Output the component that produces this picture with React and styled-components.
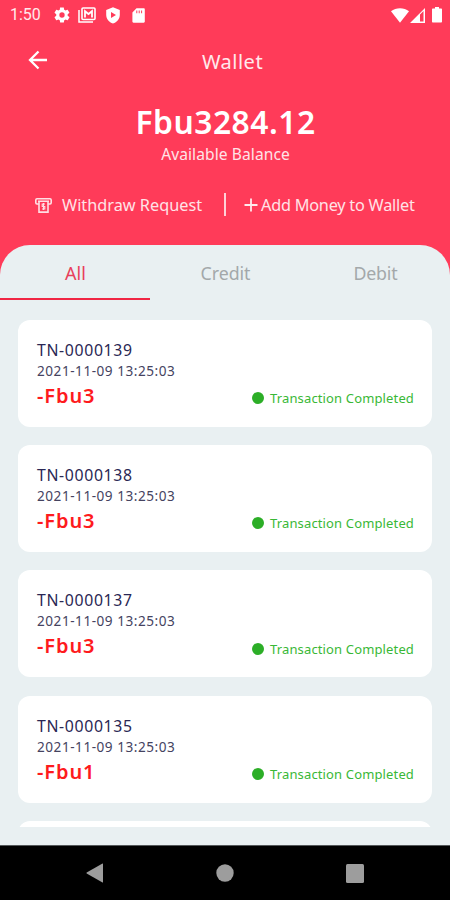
import React from "react";
import styled, { createGlobalStyle } from "styled-components";

const Global = createGlobalStyle`
  * { box-sizing: border-box; }
  html, body { margin: 0; padding: 0; overflow: hidden; }
  body { font-family: "Noto Sans", "Open Sans", sans-serif; }
`;

const Screen = styled.div`
  width: 450px;
  height: 900px;
  display: flex;
  flex-direction: column;
  overflow: hidden;
  background: #ff3b59;
`;

const StatusBar = styled.div`
  height: 30px;
  flex: none;
  display: flex;
  align-items: center;
  justify-content: space-between;
  padding: 0 8px 0 10px;
  color: #fff;
`;

const StatusGroup = styled.div`
  display: flex;
  align-items: center;
`;

const Clock = styled.span`
  width: 44px;
  font: 400 16px/30px Roboto, sans-serif;
  color: #ffe9ec;
`;

const TitleBar = styled.div`
  height: 62px;
  flex: none;
  display: grid;
  grid-template-columns: 75px 1fr 60px;
  align-items: center;
`;

const BackButton = styled.button`
  border: 0;
  padding: 0 0 2px 26px;
  background: none;
  display: flex;
`;

const Label = styled.span`
  display: block;
  white-space: nowrap;
  font-size: ${(p) => p.$size}px;
  line-height: ${(p) => p.$line}px;
  font-weight: ${(p) => p.$weight || 400};
  letter-spacing: ${(p) => p.$track || 0}px;
  color: ${(p) => p.$color || "#fff"};
`;

const Title = styled(Label)`
  text-align: center;
  padding-top: 2px;
`;

const Balance = styled.div`
  height: 96px;
  flex: none;
  padding: 10px 0 0 1px;
  display: flex;
  flex-direction: column;
  align-items: center;
`;

const Actions = styled.div`
  height: 57px;
  flex: none;
  display: flex;
  align-items: flex-start;
  padding: 5px 0 0 35px;
`;

const Action = styled.div`
  height: 24px;
  display: flex;
  align-items: center;
  gap: ${(p) => p.$gap}px;
  width: ${(p) => p.$width}px;
`;

const Divider = styled.div`
  width: 2px;
  height: 23px;
  margin-right: 18px;
  background: #ffd0d7;
`;

const Sheet = styled.div`
  height: 600px;
  flex: none;
  background: #e9f0f2;
  border-radius: 30px 30px 0 0;
  overflow: hidden;
  display: flex;
  flex-direction: column;
`;

const Tabs = styled.div`
  height: 55px;
  flex: none;
  display: grid;
  grid-template-columns: repeat(3, 1fr);
`;

const Tab = styled.div`
  display: flex;
  justify-content: center;
  padding: 15px 0 0 1px;
  border-bottom: 2px solid ${(p) => (p.$active ? "#f02644" : "transparent")};
`;

const List = styled.div`
  height: 527px;
  flex: none;
  overflow: hidden;
  padding: 19.5px 18px 0;
`;

const Card = styled.div`
  height: 107px;
  margin-bottom: 18.4px;
  padding: 20px 18px 0 19px;
  border-radius: 12px;
  background: #fff;
`;

const CardFoot = styled.div`
  display: flex;
  justify-content: space-between;
  align-items: center;
`;

const Status = styled.div`
  display: flex;
  align-items: center;
  gap: 6px;
  padding-top: 5px;
`;

const Dot = styled.span`
  width: 12px;
  height: 12px;
  border-radius: 50%;
  background: #2cae27;
`;

const NavBar = styled.div`
  flex: 1;
  background: #000;
  border-top: 1px solid #54585a;
  display: flex;
  justify-content: space-between;
  align-items: center;
  padding: 0 86px;
`;

const Icon = styled.svg`
  display: block;
  flex: none;
  margin-right: ${(p) => p.$after || 0}px;
`;

const transactions = [
  { id: "TN-0000139", amount: "-Fbu3" },
  { id: "TN-0000138", amount: "-Fbu3" },
  { id: "TN-0000137", amount: "-Fbu3" },
  { id: "TN-0000135", amount: "-Fbu1" },
];

const GEAR =
  "M19.4 13c0-.3.1-.6.1-1s0-.7-.1-1l2.1-1.600c.2-.2.3-.4.1-.6l-2-3.500c-.1-.2-.4-.3-.6-.2l-2.500 1c-.5-.4-1.100-.7-1.700-1l-.4-2.600c0-.3-.2-.5-.5-.5h-4c-.3 0-.5.2-.5.5L9.100 5.100c-.6.2-1.200.6-1.700 1l-2.500-1c-.2-.1-.5 0-.6.2l-2 3.500c-.1.2-.1.5.1.6L4.500 11c0 .3-.1.7-.1 1s0 .7.1 1l-2.100 1.600c-.2.2-.2.4-.1.6l2 3.500c.1.2.4.3.6.2l2.500-1c.5.4 1.100.7 1.700 1l.4 2.600c0 .3.2.5.5.5h4c.3 0 .5-.2.5-.5l.4-2.600c.6-.2 1.200-.6 1.700-1l2.500 1c.2.1.5 0 .6-.2l2-3.500c.1-.2.1-.5-.1-.6L19.400 13zM12 15.500a3.500 3.500 0 1 1 0-7 3.500 3.500 0 0 1 0 7z";

function TransactionCard({ id, amount }) {
  return (
    <Card>
      <Label $size={15.8} $line={21} $color="#2a2754" $track={0.65}>{id}</Label>
      <Label $size={13.6} $line={20} $color="#45435f" $track={0.52}>2021-11-09 13:25:03</Label>
      <CardFoot>
        <Label $size={20} $line={30} $weight={600} $color="#fe1a1d" $track={0.9}>{amount}</Label>
        <Status>
          <Dot />
          <Label $size={13} $line={20} $color="#39b836" $track={0.14}>Transaction Completed</Label>
        </Status>
      </CardFoot>
    </Card>
  );
}

export default function App() {
  return (
    <>
      <Global />
      <Screen>
        <StatusBar>
          <StatusGroup>
            <Clock>1:50</Clock>
            <Icon $after={8} width="16" height="16" viewBox="1.500 1.500 21 21" fill="#fff" fillRule="evenodd">
              <path d={GEAR} />
            </Icon>
            <Icon $after={9} width="18" height="16" viewBox="0 0 18 16" fill="none">
              <path d="M1 3v12h14" stroke="#fff" strokeWidth="1.500" />
              <rect x="4" y="1" width="13" height="11.500" rx="1" stroke="#fff" strokeWidth="1.600" />
              <path d="M7 10.500V4.200L10.500 7l3.500-2.800v6.300" stroke="#fff" strokeWidth="1.800" />
            </Icon>
            <Icon $after={11} width="16" height="17" viewBox="0 0 16 17" fill="#fff" fillRule="evenodd">
              <path d="M8 .3l6.800 2.600v4.900c0 4-2.800 7.500-6.800 8.800C4 15.300 1.200 11.800 1.200 7.800V2.900zM6 5v6l5-3z" />
            </Icon>
            <Icon width="13" height="15" viewBox="0 0 13 15" fill="#fff" fillRule="evenodd">
              <path d="M4.500.3h7.200c.7 0 1.100.4 1.100 1.100v12.200c0 .7-.4 1.100-1.100 1.100H1.500c-.7 0-1.100-.4-1.100-1.100V4.500zM4.300 2.500v2.700h1V2.500zm2.400 0v2.700h1V2.500zm2.400 0v2.700h1V2.500z" />
            </Icon>
          </StatusGroup>
          <StatusGroup>
            <Icon $after={1} width="18" height="15" viewBox="0 0 18 15" fill="#fff">
              <path d="M0 3.200C5-.9 13-.9 18 3.200L9 14.800z" />
            </Icon>
            <Icon $after={7} width="15" height="15" viewBox="0 0 15 15" fill="#fff" fillRule="evenodd">
              <path d="M0 15L15 0v15zM10 6.500v7h3.500V3z" />
            </Icon>
            <Icon width="10" height="16" viewBox="0 0 10 16" fill="#fff">
              <path d="M3 0h4v1.600h2c.6 0 1 .4 1 1v12c0 .6-.4 1-1 1H1c-.6 0-1-.4-1-1v-12c0-.6.4-1 1-1h2z" />
            </Icon>
          </StatusGroup>
        </StatusBar>

        <TitleBar>
          <BackButton aria-label="Back">
            <Icon width="22" height="20" viewBox="0 0 22 20" fill="none" stroke="#fff" strokeWidth="2.300">
              <path d="M21 10H4M12.500 1.500L4 10l8.500 8.500" />
            </Icon>
          </BackButton>
          <Title $size={20} $line={28} $color="#ffe9ec" $track={0.5}>Wallet</Title>
        </TitleBar>

        <Balance>
          <Label $size={31.8} $line={40} $weight={650} $track={0.5}>Fbu3284.12</Label>
          <Label $size={15.6} $line={24} $color="#ffe3e7" $track={0.07}>Available Balance</Label>
        </Balance>

        <Actions>
          <Action $gap={10} $width={189}>
            <Icon width="17" height="15" viewBox="0 0 17 15" fill="none" stroke="#ffdfe4" strokeWidth="1.600">
              <path d="M3.500 6H2A1.300 1.300 0 0 1 .8 4.700V2A1.300 1.300 0 0 1 2 .8h13A1.300 1.300 0 0 1 16.200 2v2.700A1.300 1.300 0 0 1 15 6h-1.500M3 3.300h11M4 3.300v10.800h9V3.300" />
              <path d="M10 6H7.200v2.500h2.600V11H7M8.500 5v7" strokeWidth="1.100" />
            </Icon>
            <Label $size={16.3} $line={25} $color="#ffe3e7">Withdraw Request</Label>
          </Action>
          <Divider />
          <Action $gap={3}>
            <Icon width="14" height="14" viewBox="0 0 14 14" fill="none" stroke="#ffe9ec" strokeWidth="1.800">
              <path d="M7 .5v13M.5 7h13" />
            </Icon>
            <Label $size={16.3} $line={25} $color="#ffe3e7" $track={-0.24}>Add Money to Wallet</Label>
          </Action>
        </Actions>

        <Sheet>
          <Tabs>
            <Tab $active><Label $size={18} $line={27} $color="#e8405b">All</Label></Tab>
            <Tab><Label $size={17.8} $line={27} $color="#a3a8aa" $track={-0.05}>Credit</Label></Tab>
            <Tab><Label $size={17.8} $line={27} $color="#a3a8aa" $track={-0.2}>Debit</Label></Tab>
          </Tabs>
          <List>
            {transactions.map((t) => (
              <TransactionCard key={t.id} {...t} />
            ))}
            <Card />
          </List>
        </Sheet>

        <NavBar>
          <Icon width="18" height="20" viewBox="0 0 18 20" fill="#9d9d9d">
            <path d="M16.500.5Q17 .3 17 1v18q0 .7-.5.500L.7 10.500Q.2 10 .7 9.500z" />
          </Icon>
          <Icon width="18" height="18" viewBox="0 0 18 18" fill="#9d9d9d">
            <circle cx="9" cy="9" r="8.700" />
          </Icon>
          <Icon width="18" height="19" viewBox="0 0 18 19" fill="#9d9d9d">
            <rect width="18" height="19" rx="1.500" />
          </Icon>
        </NavBar>
      </Screen>
    </>
  );
}
